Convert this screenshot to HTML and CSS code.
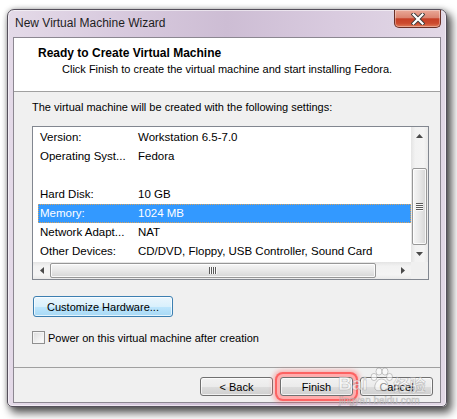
FILE: index.html
```html
<!DOCTYPE html>
<html>
<head>
<meta charset="utf-8">
<title>New Virtual Machine Wizard</title>
<link rel="stylesheet" href="styles.css">
</head>
<body>
<div class="window">
  <div class="titlebar">
    <span class="title">New Virtual Machine Wizard</span>
    <div class="close">
      <svg width="14" height="12" viewBox="0 0 14 12"><path d="M2.5 1.5 L11.5 10.5 M11.5 1.5 L2.5 10.5" stroke="#3b3b3b" stroke-width="4" stroke-linecap="square"/><path d="M2.5 1.5 L11.5 10.5 M11.5 1.5 L2.5 10.5" stroke="#ffffff" stroke-width="2.2" stroke-linecap="square"/></svg>
    </div>
  </div>
  <div class="client">
    <div class="header">
      <div class="h-title">Ready to Create Virtual Machine</div>
      <div class="h-sub">Click Finish to create the virtual machine and start installing Fedora.</div>
    </div>
    <div class="body">
      <div class="intro">The virtual machine will be created with the following settings:</div>
      <div class="listbox">
        <div class="rows">
          <div class="row"><span class="c1">Version:</span><span class="c2">Workstation 6.5-7.0</span></div>
          <div class="row"><span class="c1">Operating Syst...</span><span class="c2">Fedora</span></div>
          <div class="row"></div>
          <div class="row"><span class="c1">Hard Disk:</span><span class="c2">10 GB</span></div>
          <div class="row selected"><span class="c1">Memory:</span><span class="c2">1024 MB</span></div>
          <div class="row"><span class="c1">Network Adapt...</span><span class="c2">NAT</span></div>
          <div class="row"><span class="c1">Other Devices:</span><span class="c2">CD/DVD, Floppy, USB Controller, Sound Card</span></div>
        </div>
        <div class="vscroll">
          <div class="sb-btn"><svg width="7" height="4" viewBox="0 0 7 4"><path d="M0 4 L3.5 0 L7 4Z" fill="#4a4a4a"/></svg></div>
          <div class="v-track-top"></div>
          <div class="v-thumb"><span class="grip-v"></span></div>
          <div class="sb-btn"><svg width="7" height="4" viewBox="0 0 7 4"><path d="M0 0 L3.5 4 L7 0Z" fill="#4a4a4a"/></svg></div>
        </div>
        <div class="hscroll">
          <div class="sb-btn"><svg width="4" height="7" viewBox="0 0 4 7"><path d="M4 0 L0 3.5 L4 7Z" fill="#4a4a4a"/></svg></div>
          <div class="h-thumb"><span class="grip-h"></span></div>
          <div class="h-track-end"></div>
          <div class="sb-btn"><svg width="4" height="7" viewBox="0 0 4 7"><path d="M0 0 L4 3.5 L0 7Z" fill="#4a4a4a"/></svg></div>
        </div>
        <div class="corner"></div>
      </div>
      <button class="btn btn-hot">Customize Hardware...</button>
      <label class="check"><span class="box"></span><span>Power on this virtual machine after creation</span></label>
    </div>
    <div class="footer">
      <button class="btn fbtn">&lt; Back</button>
      <button class="btn fbtn finish">Finish</button>
      <button class="btn fbtn">Cancel</button>
    </div>
  </div>
</div>
<div class="watermark">
  <div class="wm-main"><span class="wm-bai">Bai</span><svg class="wm-paw" width="24" height="26" viewBox="0 0 24 26"><g fill="rgba(255,255,255,0.55)" stroke="rgba(110,110,110,0.35)" stroke-width="1"><ellipse cx="5" cy="10" rx="3" ry="3.6"/><ellipse cx="10" cy="4.5" rx="3" ry="3.6"/><ellipse cx="16" cy="4.5" rx="3" ry="3.6"/><ellipse cx="20.5" cy="10" rx="3" ry="3.6"/><path d="M12.5 12 C8 12 5 18 6 21.5 C7 24.5 10 23.5 12.5 23.5 C15 23.5 18 24.5 19 21.5 C20 18 17 12 12.5 12Z"/></g></svg><span class="wm-cn">经验</span></div>
  <div class="wm-url">jingyan.baidu.com</div>
</div>
</body>
</html>
```
FILE: styles.css
```css
* { box-sizing: border-box; }
html, body { margin: 0; padding: 0; background: #ffffff; }
body {
  position: relative;
  width: 457px;
  height: 419px;
  overflow: hidden;
  font-family: "Liberation Sans", Arial, sans-serif;
  font-size: 11px;
  color: #000;
}
.window {
  margin: 9px 0 0 7px;
  width: 440px;
  height: 398px;
  border: 1px solid #56505c;
  border-radius: 7px 7px 5px 5px;
  background: linear-gradient(to right, #e4dae8 0%, #d8cade 25%, #cdbdd4 50%, #d9cbdf 75%, #e2d8e6 100%);
  box-shadow: inset 0 0 0 1px rgba(255,255,255,0.55), 4px 5px 9px 1px rgba(0,0,0,0.65), 0 0 5px rgba(0,0,0,0.25);
  padding: 0 5px 3px 5px;
  display: flex;
  flex-direction: column;
}
.titlebar {
  flex: 0 0 27px;
  display: flex;
  align-items: flex-start;
}
.title {
  margin: 6px 0 0 2px;
  font-size: 12px;
  line-height: 15px;
  color: #1e1e1e;
}
.close {
  margin-left: auto;
  width: 47px;
  height: 18px;
  border: 1px solid #6a2f26;
  border-top: none;
  border-radius: 0 0 5px 5px;
  background: linear-gradient(#eaa999 0%, #db8470 45%, #c63f26 52%, #cc4a2e 78%, #e07a58 100%);
  box-shadow: inset 0 0 0 1px rgba(255,255,255,0.35);
  display: flex;
  align-items: center;
  justify-content: center;
}
.client {
  flex: 0 0 366px;
  border: 1px solid #8c8791;
  background: #f0f0f0;
  display: flex;
  flex-direction: column;
}
.header {
  flex: 0 0 54px;
  background: #ffffff;
  border-bottom: 1px solid #a0a0a0;
  padding: 7px 0 0 24px;
}
.h-title { font-size: 12px; font-weight: bold; line-height: 16px; }
.h-sub { margin-left: 24px; line-height: 16px; }
.body {
  flex: 1;
  padding: 7px 0 0 18px;
  display: flex;
  flex-direction: column;
  align-items: flex-start;
}
.intro { line-height: 16px; }
.listbox {
  margin-top: 11px;
  width: 397px;
  height: 154px;
  border: 1px solid #828790;
  background: #fff;
  display: grid;
  grid-template-columns: 378px 17px;
  grid-template-rows: 135px 17px;
}
.rows {
  padding: 1px 0 0 5px;
  font-size: 11.5px;
  overflow: hidden;
}
.row {
  height: 19px;
  line-height: 19px;
  padding-left: 2px;
  display: flex;
  white-space: nowrap;
}
.row.selected {
  background: #3399ff;
  color: #fff;
  outline: 1px dotted #d9a25a;
  outline-offset: -1px;
}
.c1 { width: 98px; flex: 0 0 98px; }
.vscroll {
  display: flex;
  flex-direction: column;
  background: linear-gradient(to right, #e4e4e4 0%, #f2f2f2 25%, #f4f4f4 75%, #e9e9e9 100%);
}
.sb-btn {
  flex: 0 0 17px;
  width: 17px;
  height: 17px;
  display: flex;
  align-items: center;
  justify-content: center;
}
.v-track-top { flex: 0 0 24px; }
.v-thumb {
  flex: 0 0 77px;
  margin: 0 1px;
  border: 1px solid #979797;
  border-radius: 2px;
  background: linear-gradient(to right, #f6f6f6 0%, #e8e8e8 50%, #d6d6d6 100%);
  box-shadow: inset 0 0 0 1px rgba(255,255,255,0.8);
  display: flex;
  align-items: center;
  justify-content: center;
}
.grip-v {
  width: 7px;
  height: 8px;
  background: repeating-linear-gradient(#5a5a5a 0 1px, #fafafa 1px 2px);
}
.hscroll {
  display: flex;
  background: linear-gradient(#e4e4e4 0%, #f2f2f2 25%, #f4f4f4 75%, #e9e9e9 100%);
}
.h-thumb {
  flex: 0 0 326px;
  margin: 1px 0;
  border: 1px solid #979797;
  border-radius: 2px;
  background: linear-gradient(#f6f6f6 0%, #e8e8e8 50%, #d6d6d6 100%);
  box-shadow: inset 0 0 0 1px rgba(255,255,255,0.8);
  display: flex;
  align-items: center;
  justify-content: center;
}
.h-track-end { flex: 1; }
.grip-h {
  width: 8px;
  height: 7px;
  background: repeating-linear-gradient(to right, #5a5a5a 0 1px, #fafafa 1px 2px);
}
.corner { background: #f0f0f0; }
.btn {
  font-family: "Liberation Sans", Arial, sans-serif;
  font-size: 11px;
  color: #000;
  border: 1px solid #707070;
  border-radius: 3px;
  background: linear-gradient(#f2f2f2 0%, #ebebeb 50%, #dddddd 51%, #cfcfcf 100%);
  box-shadow: inset 0 0 0 1px rgba(255,255,255,0.7);
  padding: 0;
  margin: 0;
}
.btn-hot {
  margin: 16px 0 0 1px;
  width: 140px;
  height: 21px;
  border-color: #3c7fb1;
  background: linear-gradient(#eaf6fd 0%, #d9f0fc 50%, #bee6fd 51%, #a7d9f5 100%);
}
.check {
  margin-top: 14px;
  height: 13px;
  display: flex;
  align-items: center;
  gap: 3px;
  line-height: 16px;
}
.box {
  width: 13px;
  height: 13px;
  border: 1px solid #8f8f8f;
  background: linear-gradient(135deg, #dcdcdc 0%, #f4f4f4 70%, #ffffff 100%);
  box-shadow: inset 0 0 0 1px #f4f4f4;
}
.footer {
  flex: 0 0 35px;
  border-top: 1px solid #a0a0a0;
  padding: 9px 7px 0 0;
  display: flex;
  justify-content: flex-end;
  align-items: flex-start;
  gap: 7px;
}
.fbtn { width: 73px; height: 19px; }
.finish {
  box-shadow: inset 0 0 0 1px rgba(255,255,255,0.7), 0 0 0 3px rgba(255,205,205,0.7), 0 0 0 5px rgba(255,70,70,0.75), 0 0 4px 7px rgba(255,90,90,0.4);
}
.watermark {
  position: absolute;
  left: 338px;
  top: 366px;
  color: rgba(255,255,255,0.6);
  -webkit-text-stroke: 0.7px rgba(100,100,100,0.35);
  pointer-events: none;
}
.wm-main { display: flex; align-items: flex-end; height: 29px; }
.wm-bai { font-size: 19px; font-weight: bold; line-height: 22px; }
.wm-paw { margin: 0 1px 2px 1px; }
.wm-cn { font-family: "Noto Sans CJK SC", sans-serif; font-size: 16px; line-height: 22px; font-weight: bold; }
.wm-url { font-size: 10px; line-height: 12px; margin-left: 1px; }
```
